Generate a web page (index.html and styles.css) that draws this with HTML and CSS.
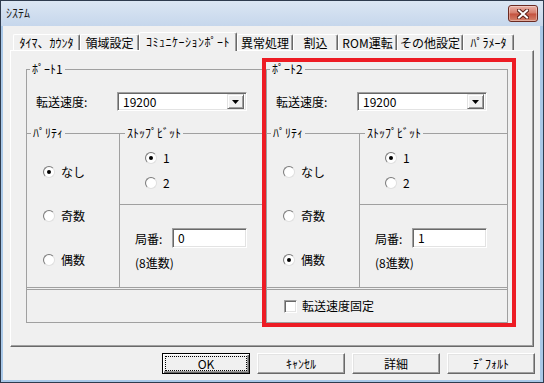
FILE: index.html
```html
<!DOCTYPE html>
<html>

<head>
	<meta charset="utf-8">
	<title>ｼｽﾃﾑ</title>
	<link rel="stylesheet" href="styles.css">
</head>

<body>
	<div class="window">
		<div class="titlebar">
			<span class="title">ｼｽﾃﾑ</span>
			<div class="close">
				<svg width="12" height="10" viewBox="0 0 12 10">
					<path d="M2 1.5 L10 8.5 M10 1.5 L2 8.5" stroke="#5a1f18" stroke-width="4" stroke-linecap="square" />
					<path d="M2 1.5 L10 8.5 M10 1.5 L2 8.5" stroke="#fff" stroke-width="2" stroke-linecap="square" />
				</svg>
			</div>
		</div>

		<div class="client">
			<div class="tabs">
				<div class="tab t-timer">ﾀｲﾏ、ｶｳﾝﾀ</div>
				<div class="tab t-area">領域設定</div>
				<div class="tab t-comm selected">ｺﾐｭﾆｹｰｼｮﾝﾎﾟｰﾄ</div>
				<div class="tab t-error">異常処理</div>
				<div class="tab t-irq">割込</div>
				<div class="tab t-rom">ROM運転</div>
				<div class="tab t-other">その他設定</div>
				<div class="tab t-param">ﾊﾟﾗﾒｰﾀ</div>
			</div>

			<div class="page">
				<!-- port 1 -->
				<div class="port port1">
					<span class="legend">ﾎﾟｰﾄ1</span>
					<div class="speed">
						<span class="speed-label">転送速度:</span>
						<div class="combo">
							<span class="combo-text">19200</span>
							<span class="combo-btn"><svg width="7" height="4" viewBox="0 0 7 4"><path d="M0 0 H7 L3.5 4 Z" fill="#000" /></svg></span>
						</div>
					</div>
					<div class="opts">
						<div class="parity">
							<span class="legend">ﾊﾟﾘﾃｨ</span>
							<div class="parity-list">
								<div class="opt"><span class="radio on"></span>なし</div>
								<div class="opt"><span class="radio"></span>奇数</div>
								<div class="opt"><span class="radio"></span>偶数</div>
							</div>
						</div>
						<div class="right-col">
							<div class="stopbits">
								<span class="legend">ｽﾄｯﾌﾟﾋﾞｯﾄ</span>
								<div class="opt first"><span class="radio on"></span>1</div>
								<div class="opt"><span class="radio"></span>2</div>
							</div>
							<div class="station">
								<div class="station-row">
									<span class="station-label">局番:</span>
									<div class="field">0</div>
								</div>
								<div class="note">(8進数)</div>
							</div>
						</div>
					</div>
					<div class="bottom-box"></div>
				</div>

				<!-- port 2 -->
				<div class="port port2">
					<span class="legend">ﾎﾟｰﾄ2</span>
					<div class="speed">
						<span class="speed-label">転送速度:</span>
						<div class="combo">
							<span class="combo-text">19200</span>
							<span class="combo-btn"><svg width="7" height="4" viewBox="0 0 7 4"><path d="M0 0 H7 L3.5 4 Z" fill="#000" /></svg></span>
						</div>
					</div>
					<div class="opts">
						<div class="parity">
							<span class="legend">ﾊﾟﾘﾃｨ</span>
							<div class="parity-list">
								<div class="opt"><span class="radio"></span>なし</div>
								<div class="opt"><span class="radio"></span>奇数</div>
								<div class="opt"><span class="radio on"></span>偶数</div>
							</div>
						</div>
						<div class="right-col">
							<div class="stopbits">
								<span class="legend">ｽﾄｯﾌﾟﾋﾞｯﾄ</span>
								<div class="opt first"><span class="radio on"></span>1</div>
								<div class="opt"><span class="radio"></span>2</div>
							</div>
							<div class="station">
								<div class="station-row">
									<span class="station-label">局番:</span>
									<div class="field">1</div>
								</div>
								<div class="note">(8進数)</div>
							</div>
						</div>
					</div>
					<div class="bottom-box">
						<div class="check-row"><span class="checkbox"></span>転送速度固定</div>
					</div>
				</div>

				<div class="highlight"></div>
			</div>

			<div class="buttons">
				<button class="btn default">OK</button>
				<button class="btn">ｷｬﾝｾﾙ</button>
				<button class="btn">詳細</button>
				<button class="btn">ﾃﾞﾌｫﾙﾄ</button>
			</div>
		</div>
	</div>
</body>

</html>
```

FILE: styles.css
```css
* {
	box-sizing: border-box;
}

body {
	margin: 0;
	font-family: "Noto Sans CJK JP", "Noto Sans", sans-serif;
	font-size: 12px;
	color: #000;
}

.window {
	width: 544px;
	height: 383px;
	border: 1px solid #2e3b4e;
	background: #a9c8e8;
	display: flex;
	flex-direction: column;
}

.titlebar {
	height: 25px;
	display: flex;
	justify-content: space-between;
	align-items: flex-start;
	background: linear-gradient(#dbe6f3, #c6d7ec);
}

.title {
	padding-left: 5px;
	line-height: 24px;
	color: #1a1a1a;
}

.close {
	width: 30px;
	height: 17px;
	margin: 4px 5px 0 0;
	border: 1px solid #6b2a22;
	border-radius: 3px;
	background: linear-gradient(#eab1a6, #d57c6b 48%, #c4513e 52%, #d4826c);
	box-shadow: inset 0 0 0 1px rgba(255, 255, 255, 0.35);
	display: flex;
	align-items: center;
	justify-content: center;
}

.client {
	flex: 1;
	margin: 0 3px 2px 2px;
	background: #f0f0f0;
	display: flex;
	flex-direction: column;
}

/* tab strip */
.tabs {
	display: flex;
	align-items: flex-end;
	height: 24px;
	padding-left: 10px;
}

.tab {
	height: 16px;
	line-height: 15px;
	text-align: center;
	white-space: nowrap;
	border: 1px solid #fff;
	border-right-color: #696969;
	border-bottom: none;
	border-radius: 2px 2px 0 0;
	box-shadow: inset -1px 0 #a0a0a0;
}

.tab.selected {
	height: 19px;
	margin-bottom: -1px;
	line-height: 17px;
	position: relative;
	z-index: 1;
	background: #f0f0f0;
	letter-spacing: 0.5px;
}

.t-timer { width: 67px; }
.t-area { width: 59px; }
.t-comm { width: 98px; }
.t-error { width: 56px; }
.t-irq { width: 45px; }
.t-rom { width: 59px; }
.t-other { width: 66px; }
.t-param { width: 51px; }

/* tab page */
.page {
	position: relative;
	height: 297px;
	margin: 0 6px 0 7px;
	padding: 18px 0 0 15px;
	border: 1px solid;
	border-color: #fff #696969 #696969 #fff;
	box-shadow: inset -1px -1px #a0a0a0;
	display: flex;
	align-items: flex-start;
}

.port {
	height: 254px;
	border: 1px solid #a0a0a0;
	display: flex;
	flex-direction: column;
}

.port1 { width: 240px; }
.port2 { width: 242px; }

.legend {
	align-self: flex-start;
	display: block;
	height: 14px;
	line-height: 14px;
	margin: -8px 0 0 3px;
	padding: 0 2px;
	background: #f0f0f0;
	white-space: nowrap;
}

.speed {
	display: flex;
	align-items: center;
	height: 19px;
	margin-top: 16px;
}

.speed-label {
	width: 90px;
	padding-left: 9px;
}

.combo {
	display: flex;
	justify-content: space-between;
	width: 130px;
	height: 19px;
	padding: 2px;
	background: #fff;
	border: 1px solid;
	border-color: #a0a0a0 #fff #fff #a0a0a0;
	box-shadow: inset 1px 1px #696969, inset -1px -1px #e3e3e3;
}

.combo-text {
	padding-left: 3px;
	line-height: 14px;
}

.combo-btn {
	width: 17px;
	height: 15px;
	margin-top: -1px;
	background: #f0f0f0;
	border: 1px solid;
	border-color: #e3e3e3 #696969 #696969 #e3e3e3;
	box-shadow: inset 1px 1px #fff, inset -1px -1px #a0a0a0;
	display: flex;
	align-items: center;
	justify-content: center;
}

.opts {
	display: flex;
	height: 155px;
	margin-top: 22px;
	border-top: 1px solid #a0a0a0;
	border-bottom: 1px solid #a0a0a0;
}

.parity {
	width: 93px;
	border-right: 1px solid #a0a0a0;
	display: flex;
	flex-direction: column;
}

.parity .legend {
	margin-left: 4px;
}

.parity-list {
	display: flex;
	flex-direction: column;
	gap: 30px;
	margin-top: 25px;
	padding-left: 16px;
}

.opt {
	display: flex;
	align-items: center;
	height: 14px;
	line-height: 14px;
	gap: 6px;
}

.radio {
	width: 12px;
	height: 12px;
	border-radius: 50%;
	border: 1px solid;
	border-color: #7a7a7a #e0e0e0 #e0e0e0 #7a7a7a;
	background: radial-gradient(circle at 60% 60%, #fff 55%, #e6e6e6);
	display: flex;
	align-items: center;
	justify-content: center;
}

.radio.on::after {
	content: "";
	width: 4px;
	height: 4px;
	border-radius: 50%;
	background: #000;
}

.right-col {
	flex: 1;
	display: flex;
	flex-direction: column;
}

.stopbits {
	height: 71px;
	border-bottom: 1px solid #a0a0a0;
	display: flex;
	flex-direction: column;
	padding-left: 25px;
}

.stopbits .legend {
	margin-left: -20px;
}

.stopbits .opt {
	margin-top: 11px;
}

.station {
	flex: 1;
	padding: 23px 0 0 15px;
}

.station-row {
	display: flex;
	align-items: center;
}

.station-label {
	width: 37px;
}

.field {
	width: 75px;
	height: 20px;
	padding: 2px 0 0 5px;
	line-height: 14px;
	background: #fff;
	border: 1px solid;
	border-color: #a0a0a0 #fff #fff #a0a0a0;
	box-shadow: inset 1px 1px #696969, inset -1px -1px #e3e3e3;
}

.note {
	margin-top: 8px;
	line-height: 14px;
}

.bottom-box {
	flex: 1;
	margin-top: 1px;
	border-top: 1px solid #a0a0a0;
	display: flex;
	align-items: center;
	padding-left: 17px;
}

.check-row {
	display: flex;
	align-items: center;
	gap: 5px;
	line-height: 14px;
}

.checkbox {
	width: 13px;
	height: 13px;
	background: #fff;
	border: 1px solid;
	border-color: #a0a0a0 #fff #fff #a0a0a0;
	box-shadow: inset 1px 1px #696969, inset -1px -1px #e3e3e3;
}

/* red annotation frame drawn over port 2 */
.highlight {
	position: absolute;
	left: 251px;
	top: 7px;
	width: 254px;
	height: 269px;
	border: 4px solid #ed1c24;
}

/* dialog buttons */
.buttons {
	display: flex;
	justify-content: flex-end;
	gap: 7px;
	padding: 6px 5px 0 0;
}

.btn {
	width: 88px;
	height: 21px;
	padding: 0;
	font: inherit;
	line-height: 17px;
	color: #000;
	background: #f0f0f0;
	border: 1px solid;
	border-color: #fff #696969 #696969 #fff;
	box-shadow: inset -1px -1px #a0a0a0, inset 1px 1px #e3e3e3;
}

.btn.default {
	border-color: #000;
	box-shadow: inset 1px 1px #fff, inset -1px -1px #696969, inset -2px -2px #a0a0a0;
	outline: 1px dotted #000;
	outline-offset: -4px;
}
```
